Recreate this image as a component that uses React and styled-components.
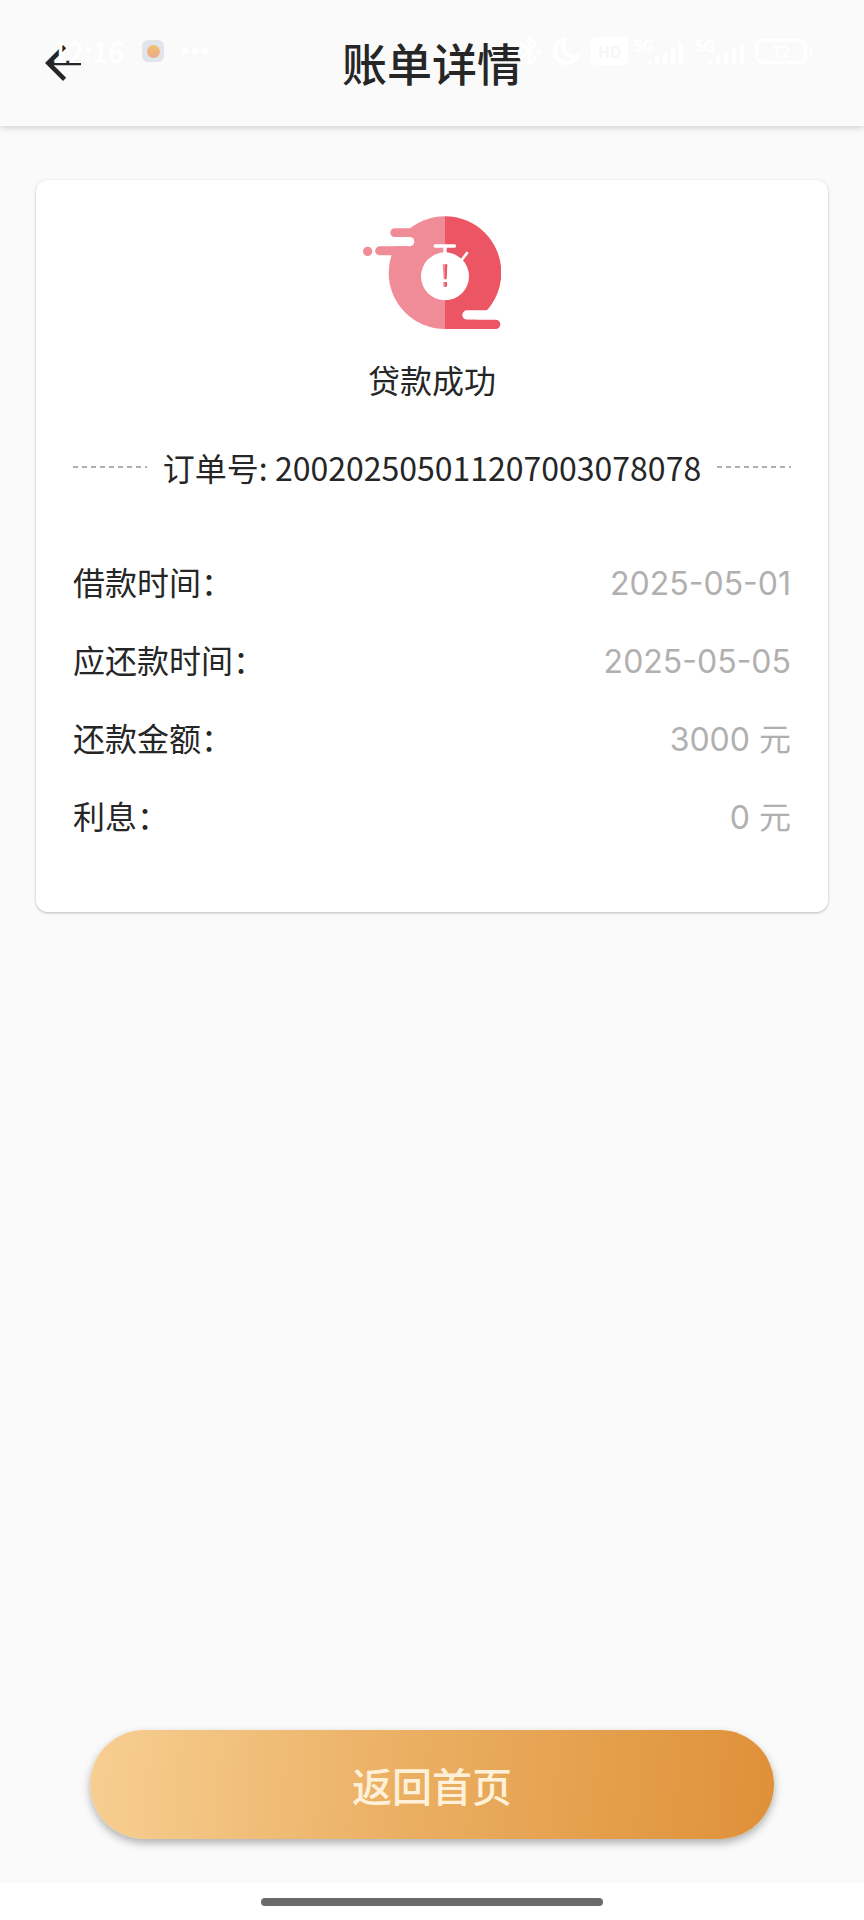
import React from 'react';
import styled, { createGlobalStyle } from 'styled-components';

const GlobalStyle = createGlobalStyle`
  *, *::before, *::after { box-sizing: border-box; }
  body {
    margin: 0;
    background: #fafafa;
    color: #262626;
    font-family: "Noto Sans CJK SC", sans-serif;
  }
`;

const Page = styled.div`
  position: relative;
  display: flex;
  flex-direction: column;
  min-height: 100vh;
  background: #fafafa;
`;

/* System status bar, drawn over the app header */
const StatusBar = styled.div`
  position: absolute;
  top: 0;
  left: 0;
  right: 0;
  z-index: 2;
  display: flex;
  align-items: center;
  justify-content: space-between;
  height: 102px;
  padding: 0 52px;
  color: #ffffff;
  pointer-events: none;
`;

const StatusGroup = styled.div`
  display: flex;
  align-items: center;
  gap: ${({ $gap }) => $gap}px;
`;

const Clock = styled.span`
  font-size: 28px;
  line-height: 32px;
  font-weight: 500;
`;

const AppBadge = styled.span`
  display: flex;
  align-items: center;
  justify-content: center;
  width: 22px;
  height: 22px;
  border-radius: 6px;
  background: #e1e4ea;

  &::before {
    content: "";
    width: 13px;
    height: 13px;
    border-radius: 50%;
    background: linear-gradient(#efc070, #eda98c);
  }
`;

const HdBadge = styled.span`
  width: 37px;
  height: 28px;
  border-radius: 5px;
  background: #ffffff;
  color: #f7f7f7;
  font-size: 16px;
  line-height: 28px;
  font-weight: 700;
  text-align: center;
`;

const SignalBox = styled.span`
  display: flex;
  align-items: flex-end;
  height: 27px;
`;

const SignalLabel = styled.span`
  align-self: flex-start;
  width: 14px;
  font-size: 16px;
  line-height: 14px;
  font-weight: 700;
`;

const Battery = styled.span`
  display: flex;
  align-items: center;

  &::after {
    content: "";
    width: 3px;
    height: 8px;
    margin-left: 2px;
    border-radius: 2px;
    background: #ffffff;
  }
`;

const BatteryLevel = styled.span`
  width: 52px;
  height: 25px;
  border: 3px solid #ffffff;
  border-radius: 8px;
  font-size: 16px;
  line-height: 19px;
  font-weight: 700;
  text-align: center;
`;

const Header = styled.header`
  display: grid;
  grid-template-columns: 54px 1fr 54px;
  align-items: center;
  height: 126px;
  padding: 0 36px;
  background: #fafafa;
  box-shadow: 0 2px 6px rgba(0, 0, 0, 0.16);
`;

const BackButton = styled.button`
  width: 54px;
  height: 54px;
  padding: 0;
  border: 0;
  background: none;
  color: #262626;
  cursor: pointer;

  svg { display: block; }
`;

const Title = styled.h1`
  margin: 0;
  font-size: 45px;
  line-height: 64px;
  font-weight: 500;
  text-align: center;
`;

const Content = styled.main`
  display: flex;
  flex: 1;
  flex-direction: column;
  justify-content: space-between;
  padding: 54px 36px 44px;
`;

const Card = styled.section`
  display: flex;
  flex-direction: column;
  align-items: center;
  padding: 36px 37px 70px;
  border-radius: 12px;
  background: #ffffff;
  box-shadow: 0 1px 3px rgba(0, 0, 0, 0.25);
  font-size: 32px;
  line-height: 48px;
`;

const ResultText = styled.p`
  margin: 26px 0 40px;
`;

const OrderLine = styled.div`
  display: flex;
  align-items: center;
  gap: 16px;
  width: 100%;

  &::before,
  &::after {
    content: "";
    flex: 1;
    height: 2px;
    background: repeating-linear-gradient(90deg, #b0b0b0 0 5px, transparent 5px 9px);
  }
`;

const Details = styled.dl`
  display: flex;
  flex-direction: column;
  gap: 27px;
  width: 100%;
  margin: 66px 0 0;
`;

const DetailRow = styled.div`
  display: flex;
  align-items: baseline;
  justify-content: space-between;
`;

const Label = styled.dt``;

const Value = styled.dd`
  margin: 0;
  color: #b0b0b0;
  font-family: Inter, "Noto Sans CJK SC", sans-serif;
`;

const HomeButton = styled.button`
  height: 109px;
  margin: 54px 54px 0;
  border: 0;
  border-radius: 55px;
  background: linear-gradient(95deg, #f7cf92, #ebb064 45%, #df9038);
  box-shadow: 0 4px 8px rgba(0, 0, 0, 0.3);
  color: #fff1d9;
  font-family: inherit;
  font-size: 40px;
  line-height: 60px;
  font-weight: 500;
  cursor: pointer;
`;

const NavBar = styled.footer`
  display: flex;
  justify-content: center;
  height: 37px;
  padding-top: 15px;
  background: #ffffff;
`;

const NavHandle = styled.span`
  width: 342px;
  height: 8px;
  border-radius: 4px;
  background: #6a6a6a;
`;

const DotsIcon = () => (
  <svg width="26" height="6" viewBox="0 0 26 6" fill="#fff" aria-hidden="true">
    <circle cx="3" cy="3" r="3" />
    <circle cx="13" cy="3" r="3" />
    <circle cx="23" cy="3" r="3" />
  </svg>
);

const BluetoothIcon = () => (
  <svg width="24" height="32" viewBox="0 0 24 32" fill="none" stroke="#fff" strokeWidth="3" aria-hidden="true">
    <path d="M3 9l15 14-7 6V3l7 6L3 23" strokeLinejoin="round" strokeLinecap="round" />
    <circle cx="2" cy="16" r="2" fill="#fff" stroke="none" />
    <circle cx="21" cy="16" r="2" fill="#fff" stroke="none" />
  </svg>
);

const MoonIcon = () => (
  <svg width="27" height="28" viewBox="0 0 27 28" fill="none" stroke="#fff" strokeWidth="4" strokeLinejoin="round" aria-hidden="true">
    <path d="M11 2C5 4 2 9 2 14a12 12 0 0 0 23 5C17 22 8 15 11 2z" />
  </svg>
);

const Signal = () => (
  <SignalBox>
    <SignalLabel>5G</SignalLabel>
    <svg width="36" height="22" viewBox="0 0 36 22" fill="#fff" aria-hidden="true">
      <rect x="0" y="17" width="4" height="5" rx="1" />
      <rect x="8" y="13" width="4" height="9" rx="1" />
      <rect x="16" y="9" width="4" height="13" rx="1" />
      <rect x="24" y="5" width="4" height="17" rx="1" />
      <rect x="32" y="0" width="4" height="22" rx="1" />
    </svg>
  </SignalBox>
);

const BackIcon = () => (
  <svg width="54" height="54" viewBox="0 0 24 24" fill="currentColor" aria-hidden="true">
    <path d="M20 11H7.83l5.59-5.59L12 4l-8 8 8 8 1.41-1.41L7.83 13H20z" />
  </svg>
);

const StopwatchLogo = () => (
  <svg width="138" height="113" viewBox="68 77 414 339" aria-hidden="true">
    {/* Two-tone disc with the speed trails */}
    <g fill="#f08b98">
      <path d="M314 78A169 169 0 0 0 314 416Z" />
      <path d="M163 114H240V140H163A13 13 0 0 1 163 114Z" />
      <circle cx="82" cy="183" r="14" />
    </g>
    <path d="M140 140H208A14 14 0 0 1 208 168H140Z" fill="#fff" />
    <path d="M118 168H200V195H118A13.500 13.500 0 0 1 118 168Z" fill="#f08b98" />
    <path d="M314 78A169 169 0 0 1 314 416Z" fill="#ec5564" />
    <path d="M482 360H380A14 14 0 0 0 380 388H482Z" fill="#fff" />
    <path d="M314 388H466A14 14 0 0 1 466 416H314Z" fill="#ec5564" />
    {/* Stopwatch */}
    <g fill="#fff">
      <circle cx="314" cy="258" r="72" />
      <rect x="280" y="162" width="67" height="10" rx="4" />
      <rect x="309" y="170" width="10" height="20" />
    </g>
    <path d="M364 209L380 188" stroke="#fff" strokeWidth="8" strokeLinecap="round" />
    <path d="M307 222H314V289H309V275H314V267H310Z" fill="#f08b98" />
    <path d="M314 222H321L319 267H314V275H320V289H314Z" fill="#ec5564" />
  </svg>
);

const details = [
  { label: '借款时间：', value: '2025-05-01' },
  { label: '应还款时间：', value: '2025-05-05' },
  { label: '还款金额：', value: '3000 元' },
  { label: '利息：', value: '0 元' },
];

export default function App() {
  return (
    <Page lang="zh-CN">
      <GlobalStyle />
      <StatusBar>
        <StatusGroup $gap={18}>
          <Clock>12:16</Clock>
          <AppBadge />
          <DotsIcon />
        </StatusGroup>
        <StatusGroup $gap={11}>
          <BluetoothIcon />
          <MoonIcon />
          <StatusGroup $gap={5}>
            <HdBadge>HD</HdBadge>
            <Signal />
          </StatusGroup>
          <Signal />
          <Battery>
            <BatteryLevel>72</BatteryLevel>
          </Battery>
        </StatusGroup>
      </StatusBar>
      <Header>
        <BackButton type="button" aria-label="返回">
          <BackIcon />
        </BackButton>
        <Title>账单详情</Title>
      </Header>
      <Content>
        <Card>
          <StopwatchLogo />
          <ResultText>贷款成功</ResultText>
          <OrderLine>
            <span>订单号: 200202505011207003078078</span>
          </OrderLine>
          <Details>
            {details.map(({ label, value }) => (
              <DetailRow key={label}>
                <Label>{label}</Label>
                <Value>{value}</Value>
              </DetailRow>
            ))}
          </Details>
        </Card>
        <HomeButton type="button">返回首页</HomeButton>
      </Content>
      <NavBar>
        <NavHandle />
      </NavBar>
    </Page>
  );
}
